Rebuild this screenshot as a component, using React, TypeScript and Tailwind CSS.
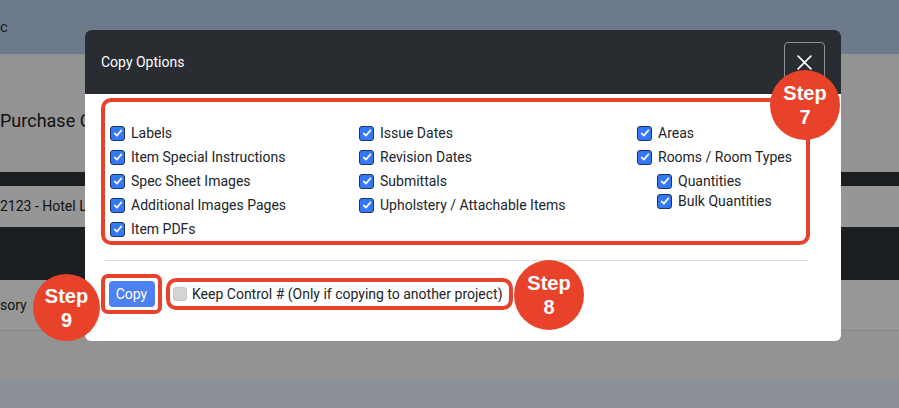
import React from 'react';

type Opt = { label: string };

const col1: Opt[] = [
  { label: 'Labels' },
  { label: 'Item Special Instructions' },
  { label: 'Spec Sheet Images' },
  { label: 'Additional Images Pages' },
  { label: 'Item PDFs' },
];

const col2: Opt[] = [
  { label: 'Issue Dates' },
  { label: 'Revision Dates' },
  { label: 'Submittals' },
  { label: 'Upholstery / Attachable Items' },
];

function Check() {
  return (
    <span className="flex h-[15px] w-[15px] shrink-0 items-center justify-center rounded-[3px] border border-[#1d3563] bg-[#3478f6]">
      <svg viewBox="0 0 16 16" className="h-[12px] w-[12px]" fill="none" stroke="white" strokeWidth="2.2" strokeLinecap="round" strokeLinejoin="round">
        <path d="M3.5 8.5l3 3 6-7" />
      </svg>
    </span>
  );
}

function Row({ label, h = 'h-[24px]' }: { label: string; h?: string }) {
  return (
    <div className={`flex items-center gap-[6px] ${h}`}>
      <Check />
      <span className="text-[14px] text-[#212529]">{label}</span>
    </div>
  );
}

function StepBadge({ n, className }: { n: string; className: string }) {
  return (
    <div
      className={`absolute flex flex-col items-center justify-center rounded-full bg-[#e8432a] text-white font-bold leading-[24px] text-[20px] ${className}`}
      style={{ fontFamily: '"Liberation Sans", Arial, sans-serif' }}
    >
      <span>Step</span>
      <span>{n}</span>
    </div>
  );
}

export default function App() {
  return (
    <div className="relative h-[408px] w-[899px] overflow-hidden" style={{ fontFamily: 'Roboto, "Liberation Sans", sans-serif' }}>
      {/* page behind the overlay */}
      <div className="flex h-[54px] items-center bg-[#6c7a8c] text-[15px] text-[#1a1a1a]">c</div>
      <div className="flex h-[118px] items-center whitespace-nowrap bg-[#939393] pt-[14px] text-[18px] text-[#111]">Purchase Order</div>
      <div className="h-[14px] bg-[#1c1f22]" />
      <div className="flex h-[41px] items-center whitespace-nowrap bg-[#969696] text-[14px] text-[#111]">2123 - Hotel Lobby</div>
      <div className="h-[53px] bg-[#1c1f22]" />
      <div className="flex h-[51px] items-center border-b border-[#858585] bg-[#979797] text-[14px] text-[#111]">sory</div>
      <div className="h-[49px] bg-[#939393]" />
      <div className="h-[28px] bg-[#8a8f95]" />

      {/* modal */}
      <div className="absolute left-[85px] top-[30px] h-[311px] w-[756px] overflow-hidden rounded-[6px] bg-white">
        <div className="flex h-[64px] items-center justify-between bg-[#292d32] pl-[16px] pr-[16px]">
          <span className="text-[14px] text-white">Copy Options</span>
          <button className="flex h-[40px] w-[41px] items-center justify-center rounded-[4px] border border-[#8d9196]">
            <svg viewBox="0 0 16 16" className="h-[17px] w-[17px]" stroke="white" strokeWidth="1.6" strokeLinecap="round">
              <path d="M2 2l12 12M14 2L2 14" />
            </svg>
          </button>
        </div>
        <div className="px-[16px] pt-[4px]">
          <div className="flex h-[147px] w-[709px] rounded-[10px] border-[4px] border-[#e8432a] pl-[5px] pt-[19px]">
            <div className="w-[249px]">
              {col1.map((o) => (
                <Row key={o.label} label={o.label} />
              ))}
            </div>
            <div className="w-[278px]">
              {col2.map((o) => (
                <Row key={o.label} label={o.label} />
              ))}
            </div>
            <div>
              <Row label="Areas" />
              <Row label="Rooms / Room Types" />
              <div className="pl-[20px]">
                <Row label="Quantities" />
                <Row label="Bulk Quantities" h="h-[16px]" />
              </div>
            </div>
          </div>
          <div className="ml-[4px] mt-[15px] h-px w-[703px] bg-[#dcdcdc]" />
          <div className="mt-[13px] flex items-center gap-[4px]">
            <div className="flex h-[40px] w-[61px] items-center justify-center rounded-[7px] border-[4px] border-[#e8432a]">
              <button className="flex h-[26px] w-[46px] items-center justify-center rounded-[4px] bg-[#4d80f0] text-[14px] text-white">
                Copy
              </button>
            </div>
            <div className="flex h-[32px] w-[347px] items-center gap-[5px] rounded-[10px] border-[4px] border-[#e8432a] pl-[3px]">
              <span className="h-[14px] w-[14px] rounded-[3px] border border-[#c8c8c8] bg-[#d4d4d4]" />
              <span className="text-[14px] text-[#212529]">Keep Control # (Only if copying to another project)</span>
            </div>
          </div>
        </div>
      </div>

      <StepBadge n="7" className="left-[770px] top-[70px] h-[70px] w-[70px]" />
      <StepBadge n="8" className="left-[514px] top-[260px] h-[70px] w-[70px]" />
      <StepBadge n="9" className="left-[33px] top-[274px] h-[67px] w-[67px]" />
    </div>
  );
}
